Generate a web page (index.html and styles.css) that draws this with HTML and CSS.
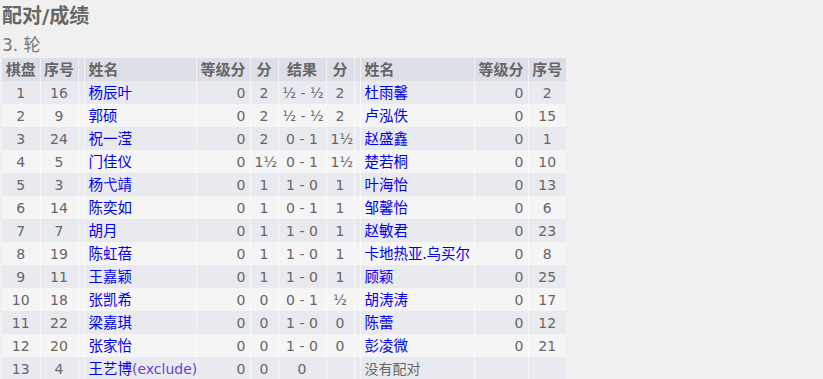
FILE: index.html
```html
<!DOCTYPE html>
<html lang="zh">
<head>
<meta charset="utf-8">
<link rel="stylesheet" href="styles.css">
</head>
<body>
<h2 class="title">配对/成绩</h2>
<h3 class="round">3. 轮</h3>
<table class="pairs">
<colgroup>
<col class="c-board"><col class="c-no"><col class="c-gap"><col class="c-name"><col class="c-rtg"><col class="c-pts"><col class="c-res"><col class="c-pts"><col class="c-gap"><col class="c-name2"><col class="c-rtg"><col class="c-no">
</colgroup>
<thead>
<tr><th>棋盘</th><th>序号</th><th></th><th class="l">姓名</th><th>等级分</th><th>分</th><th>结果</th><th>分</th><th></th><th class="l">姓名</th><th>等级分</th><th>序号</th></tr>
</thead>
<tbody>
<tr><td>1</td><td>16</td><td></td><td class="l"><a>杨辰叶</a></td><td class="r">0</td><td>2</td><td>½ - ½</td><td>2</td><td></td><td class="l"><a>杜雨馨</a></td><td class="r">0</td><td>2</td></tr>
<tr><td>2</td><td>9</td><td></td><td class="l"><a>郭硕</a></td><td class="r">0</td><td>2</td><td>½ - ½</td><td>2</td><td></td><td class="l"><a>卢泓佚</a></td><td class="r">0</td><td>15</td></tr>
<tr><td>3</td><td>24</td><td></td><td class="l"><a>祝一滢</a></td><td class="r">0</td><td>2</td><td>0 - 1</td><td>1½</td><td></td><td class="l"><a>赵盛鑫</a></td><td class="r">0</td><td>1</td></tr>
<tr><td>4</td><td>5</td><td></td><td class="l"><a>门佳仪</a></td><td class="r">0</td><td>1½</td><td>0 - 1</td><td>1½</td><td></td><td class="l"><a>楚若桐</a></td><td class="r">0</td><td>10</td></tr>
<tr><td>5</td><td>3</td><td></td><td class="l"><a>杨弋靖</a></td><td class="r">0</td><td>1</td><td>1 - 0</td><td>1</td><td></td><td class="l"><a>叶海怡</a></td><td class="r">0</td><td>13</td></tr>
<tr><td>6</td><td>14</td><td></td><td class="l"><a>陈奕如</a></td><td class="r">0</td><td>1</td><td>0 - 1</td><td>1</td><td></td><td class="l"><a>邹馨怡</a></td><td class="r">0</td><td>6</td></tr>
<tr><td>7</td><td>7</td><td></td><td class="l"><a>胡月</a></td><td class="r">0</td><td>1</td><td>1 - 0</td><td>1</td><td></td><td class="l"><a>赵敏君</a></td><td class="r">0</td><td>23</td></tr>
<tr><td>8</td><td>19</td><td></td><td class="l"><a>陈虹蓓</a></td><td class="r">0</td><td>1</td><td>1 - 0</td><td>1</td><td></td><td class="l"><a>卡地热亚.乌买尔</a></td><td class="r">0</td><td>8</td></tr>
<tr><td>9</td><td>11</td><td></td><td class="l"><a>王嘉颖</a></td><td class="r">0</td><td>1</td><td>1 - 0</td><td>1</td><td></td><td class="l"><a>顾颖</a></td><td class="r">0</td><td>25</td></tr>
<tr><td>10</td><td>18</td><td></td><td class="l"><a>张凯希</a></td><td class="r">0</td><td>0</td><td>0 - 1</td><td>½</td><td></td><td class="l"><a>胡涛涛</a></td><td class="r">0</td><td>17</td></tr>
<tr><td>11</td><td>22</td><td></td><td class="l"><a>梁嘉琪</a></td><td class="r">0</td><td>0</td><td>1 - 0</td><td>0</td><td></td><td class="l"><a>陈蕾</a></td><td class="r">0</td><td>12</td></tr>
<tr><td>12</td><td>20</td><td></td><td class="l"><a>张家怡</a></td><td class="r">0</td><td>0</td><td>1 - 0</td><td>0</td><td></td><td class="l"><a>彭凌微</a></td><td class="r">0</td><td>21</td></tr>
<tr><td>13</td><td>4</td><td></td><td class="l"><a>王艺博</a><span class="excl">(exclude)</span></td><td class="r">0</td><td>0</td><td>0</td><td></td><td></td><td class="l">没有配对</td><td class="r"></td><td></td></tr>
</tbody>
</table>
</body>
</html>
```
FILE: styles.css
```css
html, body {
  margin: 0;
  padding: 0;
  background: #f0f0f0;
}
body {
  padding: 0 2px;
  font-family: "DejaVu Sans", "Noto Sans CJK SC", sans-serif;
  color: #666;
}
.title {
  margin: 0;
  padding-top: 4px;
  height: 30px;
  font-size: 20px;
  line-height: 24px;
  font-weight: bold;
  color: #666;
}
.round {
  margin: 0;
  height: 24px;
  font-size: 17px;
  line-height: 22px;
  font-weight: normal;
  color: #777;
}
.pairs {
  border-collapse: collapse;
  table-layout: fixed;
  width: 564px;
  font-size: 14px;
}
.c-board { width: 38px; }
.c-no { width: 38px; }
.c-gap { width: 6px; }
.c-name { width: 112px; }
.c-name2 { width: 114px; }
.c-rtg { width: 54px; }
.c-pts { width: 28px; }
.c-res { width: 48px; }
.pairs th, .pairs td {
  height: 23px;
  padding: 0 4px;
  border-right: 1px solid rgba(255,255,255,0.55);
  text-align: center;
  white-space: nowrap;
  overflow: visible;
  line-height: 20px;
}
.pairs th:last-child, .pairs td:last-child { border-right: 0; }
.pairs th {
  background: #dcdfe6;
  font-weight: bold;
  color: #666;
  font-size: 15px;
  padding: 0 2px;
}
.pairs th.l { padding-left: 4px; }
.pairs th:nth-child(3), .pairs td:nth-child(3),
.pairs th:nth-child(9), .pairs td:nth-child(9) { padding: 0; }
.pairs tbody tr:nth-child(odd) { background: #e9eaef; }
.pairs tbody tr:nth-child(even) { background: #f5f5f5; }
.pairs .l { text-align: left; }
.pairs .r { text-align: right; }
.pairs a { color: #0000f0; font-family: "Noto Sans CJK SC", sans-serif; font-size: 14.5px; }
.excl { color: #6a3fd0; }
```
